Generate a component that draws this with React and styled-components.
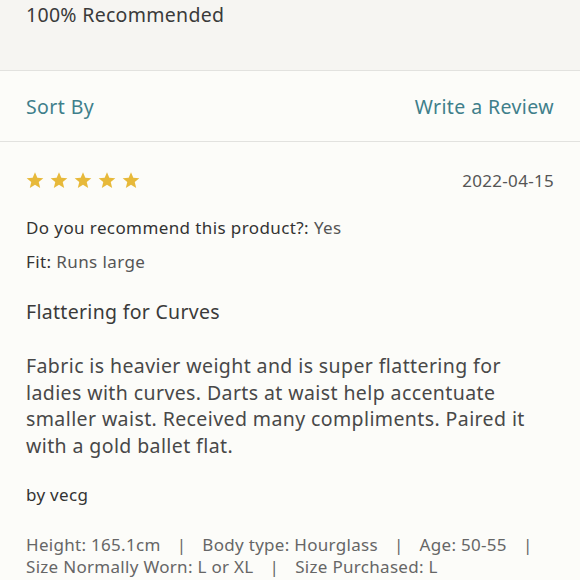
import React from 'react'
import styled, { createGlobalStyle } from 'styled-components'

const Global = createGlobalStyle`
  html, body {
    margin: 0;
    padding: 0;
    background: #fcfcf9;
  }
  body {
    font-family: "Noto Sans", Lato, sans-serif;
    color: #444;
  }
`

const Page = styled.div`
  width: 580px;
  height: 580px;
  overflow: hidden;
  background: #fcfcf9;
`

const Summary = styled.div`
  height: 71px;
  padding: 0 26px;
  background: #f6f5f2;
  border-bottom: 1px solid #e2e2df;
  box-sizing: border-box;
  font-size: 19.5px;
  color: #3a3a3a;
  letter-spacing: 0.3px;
  line-height: 30px;
`

const Toolbar = styled.div`
  height: 71px;
  display: flex;
  align-items: center;
  justify-content: space-between;
  padding: 0 26px;
  border-bottom: 1px solid #e2e2df;
  box-sizing: border-box;
`

const Link = styled.span`
  font-size: 19.5px;
  color: #3f7f8b;
  letter-spacing: 0.4px;
`

const Review = styled.div`
  padding: 25px 26px 0;
`

const TopRow = styled.div`
  display: flex;
  justify-content: space-between;
  align-items: center;
  height: 26px;
`

const Stars = styled.div`
  display: flex;
  gap: 6px;
`

const DateText = styled.span`
  font-size: 17px;
  color: #555;
  letter-spacing: 0.3px;
`

const Attr = styled.div`
  font-size: 17px;
  line-height: 22px;
  color: #555;
  letter-spacing: 0.4px;
  margin-top: ${p => p.$top}px;
`

const Label = styled.span`
  color: #333;
`

const Title = styled.div`
  font-size: 19.5px;
  color: #3a3a3a;
  letter-spacing: 0.3px;
  margin-top: 26px;
  line-height: 26px;
`

const Body = styled.p`
  width: 520px;
  margin: 28px 0 0;
  font-size: 19.5px;
  line-height: 26.5px;
  color: #484848;
  letter-spacing: 0.4px;
`

const Author = styled.div`
  font-size: 17px;
  color: #333;
  margin-top: 24px;
  letter-spacing: 0.3px;
`

const Details = styled.div`
  font-size: 17px;
  line-height: 22px;
  color: #666;
  margin-top: 28px;
  letter-spacing: 0.3px;
  white-space: nowrap;
`

const Sep = styled.span`
  margin: 0 16px;
`

function Star() {
  return (
    <svg width="18" height="18" viewBox="0 0 24 24">
      <path
        fill="#e7b93a"
        d="M12 1.5l3.1 7.4 8 .6-6.1 5.2 1.9 7.8L12 18.3l-6.9 4.2 1.9-7.8L.9 9.5l8-.6z"
      />
    </svg>
  )
}

function App() {
  return (
    <Page>
      <Global />
      <Summary>100% Recommended</Summary>
      <Toolbar>
        <Link>Sort By</Link>
        <Link>Write a Review</Link>
      </Toolbar>
      <Review>
        <TopRow>
          <Stars>
            {[0, 1, 2, 3, 4].map(i => <Star key={i} />)}
          </Stars>
          <DateText>2022-04-15</DateText>
        </TopRow>
        <Attr $top={24}><Label>Do you recommend this product?:</Label> Yes</Attr>
        <Attr $top={12}><Label>Fit:</Label> Runs large</Attr>
        <Title>Flattering for Curves</Title>
        <Body>
          Fabric is heavier weight and is super flattering for ladies with curves. Darts at waist help accentuate smaller waist. Received many compliments. Paired it with a gold ballet flat.
        </Body>
        <Author>by vecg</Author>
        <Details>
          Height: 165.1cm<Sep>|</Sep>Body type: Hourglass<Sep>|</Sep>Age: 50-55<Sep>|</Sep>
          <br />
          Size Normally Worn: L or XL<Sep>|</Sep>Size Purchased: L
        </Details>
      </Review>
    </Page>
  )
}

export default App
